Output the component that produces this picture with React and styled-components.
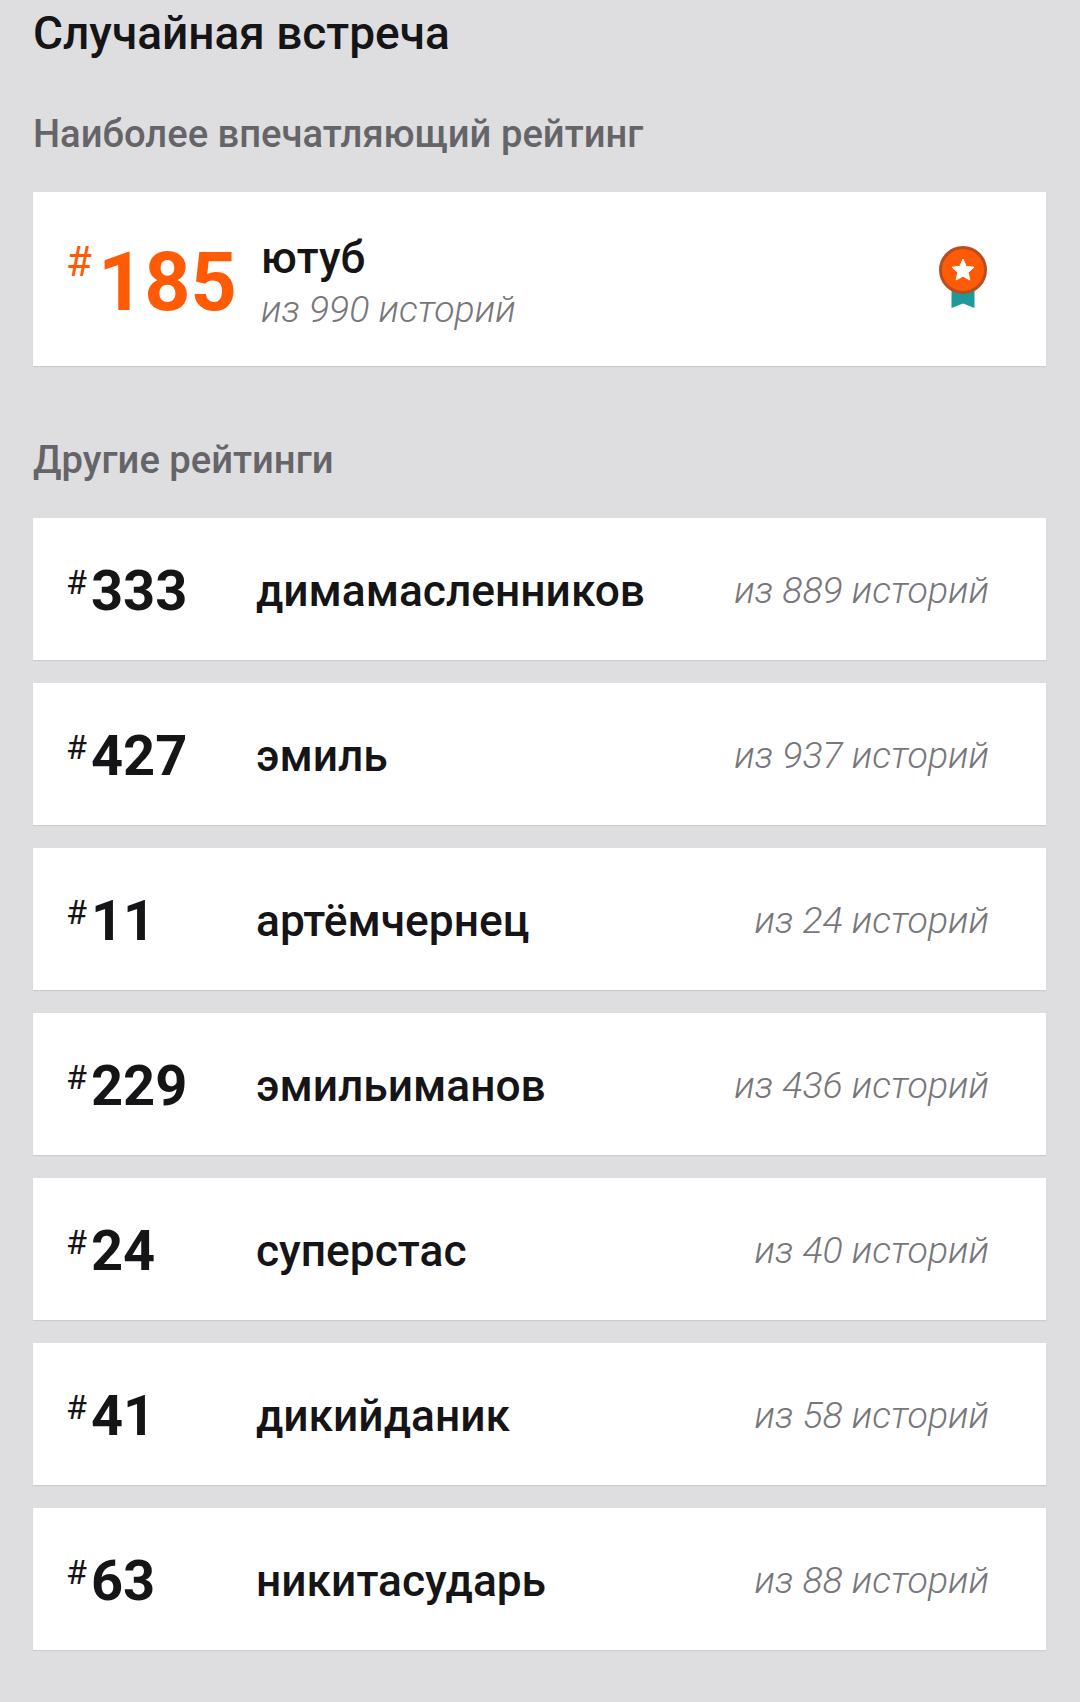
import React from 'react';
import styled, { createGlobalStyle } from 'styled-components';

const GlobalStyle = createGlobalStyle`
  html, body {
    margin: 0;
    padding: 0;
    background: #dedde0;
  }
  body {
    font-family: Roboto, "Liberation Sans", sans-serif;
  }
`;

const ratings = [
  { id: 1, rank: 333, name: 'димамасленников', total: 889 },
  { id: 2, rank: 427, name: 'эмиль', total: 937 },
  { id: 3, rank: 11, name: 'артёмчернец', total: 24 },
  { id: 4, rank: 229, name: 'эмильиманов', total: 436 },
  { id: 5, rank: 24, name: 'суперстас', total: 40 },
  { id: 6, rank: 41, name: 'дикийданик', total: 58 },
  { id: 7, rank: 63, name: 'никитасударь', total: 88 },
];

const Medal = () => (
  <MedalSvg width="50" height="64" viewBox="0 0 50 64">
    <path d="M13.5 40 H36.5 V63 L25 58.5 L13.5 63 Z" fill="#1f9a9c" />
    <circle cx="25" cy="25" r="22.5" fill="#ff5a05" stroke="#b94d1f" strokeWidth="3" />
    <path
      d="M25 14 L28.2 21.4 L36 22.2 L30.2 27.5 L31.8 35 L25 31.2 L18.2 35 L19.8 27.5 L14 22.2 L21.8 21.4 Z"
      fill="#ffffff"
      stroke="#ffffff"
      strokeWidth="1"
      strokeLinejoin="round"
    />
  </MedalSvg>
);

const App = () => {
  return (
    <>
      <GlobalStyle />
      <Page>
        <Title>Случайная встреча</Title>
        <SectionHeading>Наиболее впечатляющий рейтинг</SectionHeading>
        <FeaturedCard>
          <FeaturedRank>
            <Hash $featured>#</Hash>
            <FeaturedNumber>185</FeaturedNumber>
          </FeaturedRank>
          <FeaturedInfo>
            <FeaturedName>ютуб</FeaturedName>
            <FeaturedTotal>из 990 историй</FeaturedTotal>
          </FeaturedInfo>
          <Medal />
        </FeaturedCard>
        <OtherHeading>Другие рейтинги</OtherHeading>
        <RatingList>
          {ratings.map((item) => (
            <RatingRow key={item.id}>
              <Rank>
                <Hash>#</Hash>
                <RankNumber>{item.rank}</RankNumber>
              </Rank>
              <Name>{item.name}</Name>
              <Total>из {item.total} историй</Total>
            </RatingRow>
          ))}
        </RatingList>
      </Page>
    </>
  );
};

export default App;

const Page = styled.div`
  box-sizing: border-box;
  width: 1080px;
  height: 1702px;
  padding: 0 34px 0 33px;
  overflow: hidden;
  background: #dedde0;
`;

const Title = styled.h1`
  margin: 0;
  padding-top: 8px;
  font-size: 46px;
  line-height: 50px;
  font-weight: 500;
  color: #151416;
`;

const SectionHeading = styled.h2`
  margin: 51px 0 0;
  font-size: 38.2px;
  line-height: 50px;
  font-weight: 500;
  color: #656468;
`;

const OtherHeading = styled(SectionHeading)`
  margin-top: 69px;
`;

const Card = styled.div`
  box-sizing: border-box;
  display: flex;
  align-items: center;
  background: #ffffff;
  box-shadow: 0 1px 1px rgba(0, 0, 0, 0.08);
`;

const FeaturedCard = styled(Card)`
  height: 174px;
  margin-top: 33px;
  padding: 7px 58px 0 33px;
`;

const FeaturedRank = styled.div`
  display: flex;
  align-items: flex-start;
  width: 195px;
`;

const Hash = styled.span`
  margin-top: ${(p) => (p.$featured ? '0' : '7px')};
  font-size: ${(p) => (p.$featured ? '42px' : '34px')};
  line-height: ${(p) => (p.$featured ? '42px' : '34px')};
  font-weight: 400;
  color: ${(p) => (p.$featured ? '#ff5a05' : '#151416')};
`;

const FeaturedNumber = styled.span`
  margin-left: 6px;
  font-size: 80.7px;
  line-height: 84px;
  font-weight: 700;
  color: #ff5a05;
`;

const FeaturedInfo = styled.div`
  flex: 1;
  display: flex;
  flex-direction: column;
  margin-top: 3px;
`;

const FeaturedName = styled.div`
  font-size: 44px;
  line-height: 50px;
  font-weight: 500;
  color: #151416;
`;

const MedalSvg = styled.svg`
  display: block;
  margin-top: -12px;
`;

const Total = styled.div`
  margin-top: -2px;
  font-size: 37.5px;
  line-height: 50px;
  font-weight: 300;
  font-style: italic;
  color: #77767a;
`;

const FeaturedTotal = styled(Total)`
  margin-top: 0;
  line-height: 52px;
`;

const RatingList = styled.div`
  display: flex;
  flex-direction: column;
  gap: 23px;
  margin-top: 33px;
`;

const RatingRow = styled(Card)`
  height: 142px;
  padding: 3px 57px 0 33px;
`;

const Rank = styled.div`
  display: flex;
  align-items: flex-start;
  width: 190px;
`;

const RankNumber = styled.span`
  margin-left: 4px;
  font-size: 56px;
  line-height: 66px;
  font-weight: 700;
  color: #151416;
`;

const Name = styled.div`
  flex: 1;
  font-size: 44.3px;
  line-height: 52px;
  font-weight: 500;
  color: #151416;
`;
